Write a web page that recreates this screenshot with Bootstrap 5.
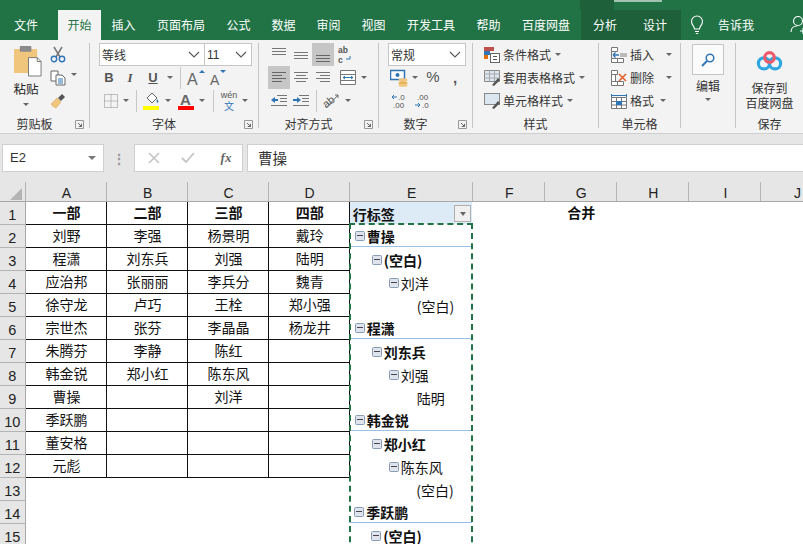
<!DOCTYPE html>
<html lang="zh"><head><meta charset="utf-8"><title>Excel</title>
<link href="https://cdn.jsdelivr.net/npm/bootstrap@5.3.0/dist/css/bootstrap.min.css" rel="stylesheet">
<style>
html,body{width:803px;height:544px;overflow:hidden;margin:0;background:#fff}
body{font-family:"Noto Sans CJK SC","Liberation Sans",sans-serif;font-size:12px;color:#333;position:relative}
.lat{font-family:"Liberation Sans","Noto Sans CJK SC",sans-serif}
.titlebar{height:40px;background:#217346;padding-top:10px;color:#fff;position:relative}
.tb{height:30px;line-height:30px;text-align:center;flex:none;font-size:12px}
.t2{width:45px}.t4{width:70px}.tf{width:52px;margin-right:6px}.tact{width:43px;background:#f3f3f3;color:#217346}
.tdark{background:#1d6039}.t48{width:48px}.t52{width:52px}
.darktop{position:absolute;left:580px;top:0;width:34px;height:10px;background:#1d6039}
.lightstrip{position:absolute;left:614px;top:0;width:48px;height:2px;background:#9fc3ae}
.tellme{margin-left:13px;width:72px}
.ribbon{height:94px;background:#f3f3f3;border-bottom:1px solid #cfcfcf;padding-top:3px}
.grp{height:85px;flex:none;display:flex;flex-direction:column;border-right:1px solid #c4c4c4}
.g1{width:90px}.g2{width:169px;padding-left:9px}.g3{width:120px;padding-left:9px}.g4{width:94px;padding-left:9px}
.g5{width:126px;padding-left:11px}.g6{width:82px;padding-left:12px}.g7{width:55px}.g8{flex:1;border-right:0}
.gbody{flex:1;min-height:0}
.glabel{height:20px;display:flex;align-items:center;margin-bottom:-6px}
.glabel span{flex:1;text-align:center}
.lnch{width:20px;flex:none;display:flex;justify-content:center}
.g2 .glabel,.g3 .glabel,.g4 .glabel{margin-left:-9px}
.g5 .glabel{margin-left:-11px}.g6 .glabel{margin-left:-12px}
.rr{height:23px;display:flex;align-items:center}
.ce{flex:none;display:flex;align-items:center;justify-content:center;height:100%}
.sel{background:#c6c6c6}
.x1{width:1px}.x2{width:2px}.x4{width:4px}.x5{width:5px}.x6{width:6px}.x7{width:7px}.x8{width:8px}.x10{width:10px}.x11{width:11px}.x14{width:14px}.x20{width:20px}.x22{width:22px}.x24{width:24px}.x26{width:26px}.x27{width:27px}.x28{width:28px}.x30{width:30px}.x36{width:36px}
.vsep{width:1px;height:22px;background:#c8c8c8;flex:none}
.crt{width:0;height:0;border-left:3px solid transparent;border-right:3px solid transparent;border-top:3px solid #666;flex:none}
.combo{height:23px;background:#fff;border:1px solid #c6c6c6;display:flex;align-items:center;justify-content:space-between;padding:0 4px 0 2px;flex:none;color:#333}
.cb1{width:106px}.cb2{width:48px;margin-left:-1px}.cb3{width:78px}
.bi{font-family:"Liberation Sans",sans-serif;font-weight:700;font-size:13px;color:#555}
.biser{font-family:"Liberation Serif",serif}
.lst{gap:3px}
.lst .crt{margin-left:1px}
.lst .crt.cg9{margin-left:9px}.lst .crt.cg3{margin-left:3px}
.w24t{width:24px}
.gcol{display:flex;flex-direction:column;align-items:center}
.pastecol{width:40px;padding-top:3px}
.smallcol{width:20px}
.pastetxt{font-size:12.5px;line-height:16px;color:#222;margin-left:-4px;margin-top:4px}
.pastecrt{margin-left:-4px;margin-top:6px}
.copycrt{margin:30px 0 0 3px}
.editbox{width:32px;height:31px;background:#fbfbfb;border:1px solid #c6c6c6;display:flex;align-items:center;justify-content:center;margin-top:1px}
.edtxt{line-height:16px;margin-top:3px}
.logo{margin-top:8px}
.lh14{line-height:14.5px;text-align:center;margin-top:10px}
.wen{line-height:9px}
.wen1{font-size:9px;color:#555}.wen2{font-size:10px;color:#2f75b5;line-height:11px}
.pct{font-size:15px;color:#555}.cma{font-size:15px;font-weight:700;color:#555;line-height:10px}
.fbar{height:48px;background:#e6e6e6;padding:10px 0 10px 2px;display:flex}
.namebox{width:102px;height:28px;background:#fff;border:1px solid #cfcfcf;display:flex;align-items:center;justify-content:space-between;padding:0 7px;font-size:13px;font-family:"Liberation Sans",sans-serif;color:#333}
.namebox .crt{border-top-color:#777;border-left-width:4px;border-right-width:4px;border-top-width:4px}
.dots{width:30px;display:flex;justify-content:center;align-items:center;color:#999;font-size:14px;font-weight:700;line-height:1}
.btnbox{width:109px;height:28px;background:#fff;border:1px solid #cfcfcf;display:flex;align-items:center;margin-right:4px}
.fx{font-family:"Liberation Serif",serif;font-style:italic;font-weight:700;font-size:13px;color:#666}
.finput{flex:1;height:28px;background:#fff;border:1px solid #cfcfcf;border-right:0;display:flex;align-items:center;padding-left:10px;font-size:14.5px;color:#333}
.sheetwrap{width:803px;height:362px;overflow:hidden;position:relative;background:#fff}
.sheet{table-layout:fixed;width:833px;border-collapse:collapse;font-size:14px;color:#111}
.sheet thead th{height:19px;background:#e6e6e6;font-weight:400;text-align:center;padding:0 0 0 2px;vertical-align:bottom;line-height:16px;border-right:1px solid #b4b4b4;border-bottom:1px solid #a8a8a8;font-family:"Liberation Sans",sans-serif;font-size:14px;color:#222}
.sheet tbody tr{height:23px}
.sheet tbody th{background:#e6e6e6;font-weight:400;text-align:center;padding:4px 0 0;border-bottom:1px solid #b4b4b4;border-right:1px solid #a8a8a8;font-family:"Liberation Sans",sans-serif;font-size:14.5px;line-height:18px;color:#222}
.sheet td{padding:0 0 2px 2px;text-align:center;line-height:20px;white-space:nowrap;overflow:hidden}
.blk{border:1.5px solid #111}
.bold{font-weight:700}
.sheet td.pv{text-align:left;font-size:14px;padding:0}
.pvh{background:#ddebf7}
.pvh-in{display:flex;align-items:center;justify-content:space-between;padding:2px 1px 0 3px;height:22px}
.ddbtn{width:17px;height:17px;background:#f0f0f0;border:1px solid #b0b0b0;display:flex;align-items:center;justify-content:center}
.ddbtn .crt{border-top-width:4px;border-left-width:3.5px;border-right-width:3.5px}
.lv{display:flex;align-items:center;gap:2px;height:22px;padding-top:2px;line-height:20px}
.l0{padding-left:5px}.l1{padding-left:22px}.l2{padding-left:39px}.l3{padding-left:67px}
.pvb .lv{height:23px;padding-top:1px;border-bottom:1px solid #9bc2e6}
.exp{width:10px;height:10px;border:1px solid #8a9bb5;background:#dfe4ec;border-radius:1.5px;flex:none;display:flex;align-items:center;justify-content:center}
.exp i{display:block;width:6px;height:1px;background:#445}
.ants{position:absolute;left:349px;top:41px;width:124px;height:400px;border:2px dashed #217346;border-bottom:0;pointer-events:none}
.corner{display:flex;justify-content:flex-end;padding:0 3px 1px 0}
col.x26{width:25px}col.cw{width:81px}col.ce2{width:123px}col.cf{width:72px}.flex-none{flex:none}
</style></head><body>

<svg width="0" height="0" class="d-block position-absolute"><defs>
<symbol id="lau" viewBox="0 0 9 9"><path d="M.5 .5h8v8M.5 .5v8h8" fill="none" stroke="#999"/><path d="M3 3l3.5 3.5M6.5 3.8v2.7H3.8" fill="none" stroke="#666"/></symbol>
<symbol id="chev" viewBox="0 0 12 7"><path d="M1 1l5 5 5-5" fill="none" stroke="#555" stroke-width="1.1"/></symbol>
</defs></svg>

<div class="titlebar d-flex">
 <div class="darktop"></div><div class="lightstrip"></div>
 <div class="tb tf">文件</div><div class="tb tact">开始</div><div class="tb t2">插入</div><div class="tb t4">页面布局</div><div class="tb t2">公式</div><div class="tb t2">数据</div><div class="tb t2">审阅</div><div class="tb t2">视图</div><div class="tb t4">开发工具</div><div class="tb t2">帮助</div><div class="tb t4">百度网盘</div>
 <div class="tb t48 tdark">分析</div><div class="tb t52 tdark">设计</div>
 <div class="d-flex align-items-center h-100">
  <svg class="ms-2" width="16" height="20" viewBox="0 0 16 20"><path d="M5.500 14c0-3-3-4-3-7.500a5.500 5.500 0 0 1 11 0c0 3.500-3 4.500-3 7.500zM6 16.500h4M6.800 18.500h2.400" fill="none" stroke="#fff" stroke-width="1.100"/></svg>
  <span class="tellme">告诉我</span>
  <svg width="20" height="20" viewBox="0 0 20 20"><circle cx="8" cy="6" r="4.500" fill="none" stroke="#fff" stroke-width="1.100"/><path d="M1 17c0-4 3-6 6-6M13 13v6M10 16h6" fill="none" stroke="#fff" stroke-width="1.100"/></svg>
 </div>
</div>

<div class="ribbon d-flex">
 <!-- clipboard -->
 <div class="grp g1">
  <div class="gbody d-flex">
   <div class="x8 flex-none"></div>
   <div class="gcol pastecol">
    <svg width="29" height="31" viewBox="0 0 30 32"><rect x="0" y="3" width="24" height="25" rx="1" fill="#f0c67c"/><rect x="6" y="0" width="12" height="6" rx="1" fill="#8a8a8a"/><path d="M15 12h9l4 4v15H15z" fill="#fff" stroke="#777"/><path d="M24 12v4h4" fill="none" stroke="#777"/></svg>
    <span class="pastetxt">粘贴</span>
    <span class="crt pastecrt"></span>
   </div>
   <div class="gcol smallcol">
    <div class="rr"><svg width="16" height="17" viewBox="0 0 16 17"><path d="M4 1l6 10M12 1L6 11" stroke="#777" stroke-width="1.500" fill="none"/><circle cx="4" cy="13" r="2.700" fill="none" stroke="#2f75b5" stroke-width="1.400"/><circle cx="12" cy="13" r="2.700" fill="none" stroke="#2f75b5" stroke-width="1.400"/></svg></div>
    <div class="rr"><svg width="16" height="16" viewBox="0 0 16 16"><path d="M1 1h7v10H1z" fill="#fff" stroke="#666"/><path d="M6 5h6l3 3v7H6z" fill="#fff" stroke="#666"/><path d="M8 9h5M8 11h5M8 13h5" stroke="#2f75b5"/></svg></div>
    <div class="rr"><svg width="16" height="16" viewBox="0 0 16 16"><path d="M1 11l6-6 4 4-5 6c-2-1-4-2-5-4z" fill="#f0c67c" stroke="#d9a95c" stroke-width=".6"/><path d="M8 5l4-4 3 3-4 4z" fill="#555"/></svg></div>
   </div>
   <span class="crt copycrt"></span>
  </div>
  <div class="glabel"><span>剪贴板</span><div class="lnch"><svg width="9" height="9"><use href="#lau"/></svg></div></div>
 </div>
 <!-- font -->
 <div class="grp g2">
  <div class="gbody">
   <div class="rr"><div class="combo cb1"><span>等线</span><svg width="12" height="7"><use href="#chev"/></svg></div><div class="combo cb2"><span class="lat">11</span><svg width="12" height="7"><use href="#chev"/></svg></div></div>
   <div class="rr">
    <div class="ce x20 bi">B</div><div class="ce x22 bi biser fst-italic">I</div><div class="ce x24 bi text-decoration-underline">U</div><div class="ce x10"><span class="crt"></span></div><div class="ce x5"></div><div class="vsep"></div><div class="ce x4"></div>
    <div class="ce x22"><svg width="20" height="18" viewBox="0 0 20 18"><text x="1" y="16" font-family="Liberation Sans" font-size="16" fill="#666">A</text><path d="M13 4l3-3 3 3z" fill="#2f75b5"/></svg></div>
    <div class="ce x22"><svg width="20" height="18" viewBox="0 0 20 18"><text x="2" y="16" font-family="Liberation Sans" font-size="14" fill="#666">A</text><path d="M12 1l3 3 3-3z" fill="#2f75b5"/></svg></div>
   </div>
   <div class="rr">
    <div class="ce x24"><svg width="14" height="14" viewBox="0 0 14 14"><path d="M.5.500h13v13H.5zM7 .500v13M.5 7h13" fill="none" stroke="#888" stroke-dasharray="1 1"/></svg></div><div class="ce x6"><span class="crt"></span></div><div class="ce x7"></div><div class="vsep"></div>
    <div class="ce x28"><svg width="18" height="18" viewBox="0 0 18 18"><path d="M5 6l5-5 5 5-5 5z" fill="#fff" stroke="#666"/><path d="M15 7c1 1.500 2 2.500 1 3.500s-2-1-1-3.500z" fill="#2f75b5"/><rect x="1" y="14" width="16" height="4" fill="#ffff00"/></svg></div><div class="ce x6"><span class="crt"></span></div><div class="ce x2"></div>
    <div class="ce x26"><svg width="18" height="18" viewBox="0 0 18 18"><text x="3" y="13" font-family="Liberation Sans" font-weight="700" font-size="15" fill="#666">A</text><rect x="1" y="14" width="16" height="4" fill="#ff0000"/></svg></div><div class="ce x6"><span class="crt"></span></div><div class="ce x8"></div><div class="vsep"></div><div class="ce x2"></div>
    <div class="ce x26 gcol wen"><span class="lat wen1">wén</span><span class="wen2">文</span></div><div class="ce x6"><span class="crt"></span></div>
   </div>
  </div>
  <div class="glabel"><span>字体</span><div class="lnch"><svg width="9" height="9"><use href="#lau"/></svg></div></div>
 </div>
 <!-- align -->
 <div class="grp g3">
  <div class="gbody">
   <div class="rr">
    <div class="ce x22"><svg width="14" height="14"><path d="M0 .5h14M0 3.500h14M0 6.500h14" stroke="#777"/></svg></div>
    <div class="ce x22"><svg width="14" height="14"><path d="M0 4.500h14M0 7.500h14M0 10.500h14" stroke="#777"/></svg></div>
    <div class="ce x22 sel"><svg width="14" height="14"><path d="M0 7.500h14M0 10.500h14M0 13.500h14" stroke="#666"/></svg></div>
    <div class="ce x22"><svg width="14" height="19" viewBox="0 0 14 19"><text x="0" y="8" font-family="Liberation Sans" font-size="8.500" font-weight="700" fill="#555">ab</text><text x="0" y="18" font-family="Liberation Sans" font-size="8.500" font-weight="700" fill="#555">c</text><path d="M12 11v3H8" fill="none" stroke="#2f75b5"/></svg></div>
   </div>
   <div class="rr">
    <div class="ce x22 sel"><svg width="14" height="13"><path d="M0 1.500h14M0 4.500h10M0 7.500h14M0 10.500h10" stroke="#666"/></svg></div>
    <div class="ce x22"><svg width="14" height="13"><path d="M0 1.500h14M2 4.500h10M0 7.500h14M2 10.500h10" stroke="#777"/></svg></div>
    <div class="ce x22"><svg width="14" height="13"><path d="M0 1.500h14M4 4.500h10M0 7.500h14M4 10.500h10" stroke="#777"/></svg></div>
    <div class="ce x27"><svg width="16" height="15" viewBox="0 0 16 15"><path d="M.5.500h15v14H.5zM.5 4.500h15M.5 10.500h15" fill="#fff" stroke="#777"/><path d="M3 7.500h10M3 7.500l2-1.500M3 7.500l2 1.500M13 7.500l-2-1.500M13 7.500l-2 1.500" stroke="#2f75b5" fill="none"/></svg></div><div class="ce x6"><span class="crt"></span></div>
   </div>
   <div class="rr">
    <div class="ce x22"><svg width="16" height="13"><path d="M6 1.500h10M9 4.500h7M9 7.500h7M0 11.500h16" stroke="#777"/><path d="M0 6l4-3v6z" fill="#2f75b5"/><path d="M3 6h4" stroke="#2f75b5" stroke-width="2"/></svg></div>
    <div class="ce x22"><svg width="16" height="13"><path d="M6 1.500h10M9 4.500h7M9 7.500h7M0 11.500h16" stroke="#777"/><path d="M8 6L4 3v6z" fill="#2f75b5"/><path d="M0 6h5" stroke="#2f75b5" stroke-width="2"/></svg></div>
    <div class="ce x4"></div><div class="vsep"></div>
    <div class="ce x28"><svg width="20" height="17" viewBox="0 0 20 17"><text x="1" y="13" transform="rotate(-38 8 9)" font-family="Liberation Sans" font-size="11" fill="#555">ab</text><path d="M5 16L17 3M17 3l-3 0M17 3v3" stroke="#666" fill="none"/></svg></div><div class="ce x6"><span class="crt"></span></div>
   </div>
  </div>
  <div class="glabel"><span>对齐方式</span><div class="lnch"><svg width="9" height="9"><use href="#lau"/></svg></div></div>
 </div>
 <!-- number -->
 <div class="grp g4">
  <div class="gbody">
   <div class="rr"><div class="combo cb3"><span>常规</span><svg width="12" height="7"><use href="#chev"/></svg></div></div>
   <div class="rr">
    <div class="ce x22"><svg width="18" height="18" viewBox="0 0 18 18"><rect x=".5" y="1.500" width="14" height="9" fill="#fff" stroke="#2f75b5" stroke-width="1.500"/><circle cx="7.500" cy="6" r="2" fill="#2f75b5"/><ellipse cx="13" cy="11" rx="4.500" ry="1.800" fill="#f0c67c"/><ellipse cx="13" cy="14" rx="4.500" ry="1.800" fill="#e7b45c"/><ellipse cx="13" cy="16.200" rx="4.500" ry="1.500" fill="#f0c67c"/></svg></div><div class="ce x2"></div><div class="ce x6"><span class="crt"></span></div>
    <div class="ce x30 lat pct">%</div><div class="ce x14 lat cma">,</div>
   </div>
   <div class="rr">
    <div class="ce x22"><svg width="17" height="16" viewBox="0 0 17 16"><path d="M1 4h5M1 4l2-2M1 4l2 2" stroke="#2f75b5" fill="none"/><text x="7" y="7" font-family="Liberation Sans" font-size="8" fill="#555">.0</text><text x="2" y="15" font-family="Liberation Sans" font-size="8" fill="#555">.00</text></svg></div>
    <div class="ce x24"><svg width="17" height="16" viewBox="0 0 17 16"><text x="3" y="7" font-family="Liberation Sans" font-size="8" fill="#555">.00</text><path d="M1 12h5M6 12l-2-2M6 12l-2 2" stroke="#2f75b5" fill="none"/><text x="8" y="15" font-family="Liberation Sans" font-size="8" fill="#555">.0</text></svg></div>
   </div>
  </div>
  <div class="glabel"><span>数字</span><div class="lnch"><svg width="9" height="9"><use href="#lau"/></svg></div></div>
 </div>
 <!-- styles -->
 <div class="grp g5">
  <div class="gbody">
   <div class="rr lst"><svg width="16" height="16" viewBox="0 0 16 16"><rect x="0" y="0" width="10" height="4" fill="#c0504d"/><rect x="0" y="4" width="6" height="4" fill="#2f75b5"/><rect x="0" y="8" width="4" height="4" fill="#e46c0a"/><rect x="6.500" y="6.500" width="9" height="9" fill="#fff" stroke="#666"/><path d="M9 9.500h4M9 12.500h4" stroke="#555"/></svg><span>条件格式</span><span class="crt"></span></div>
   <div class="rr lst"><svg width="16" height="16" viewBox="0 0 16 16"><path d="M.5.500h15v11H.5z" fill="#dce6f1" stroke="#888"/><path d="M5.500.500v11M10.500.500v11M.5 4h15M.5 8h15" stroke="#aaa"/><path d="M8 15l6-7 2 2-6 6z" fill="#555"/></svg><span>套用表格格式</span><span class="crt"></span></div>
   <div class="rr lst"><svg width="16" height="16" viewBox="0 0 16 16"><rect x=".5" y=".5" width="15" height="11" fill="#dce6f1" stroke="#888"/><path d="M8 15l6-7 2 2-6 6z" fill="#555"/></svg><span>单元格样式</span><span class="crt"></span></div>
  </div>
  <div class="glabel"><span>样式</span></div>
 </div>
 <!-- cells -->
 <div class="grp g6">
  <div class="gbody">
   <div class="rr lst"><svg width="16" height="16" viewBox="0 0 16 16"><path d="M.5.500h6v4h-6zM.5 11.500h6v4h-6zM6.500 11.500h6v4h-6zM.5 4.500v7" fill="#fff" stroke="#777"/><path d="M2 8h6M2 8l2.500-2.500M2 8l2.500 2.500" stroke="#2f75b5" stroke-width="1.300" fill="none"/><rect x="9" y="6" width="7" height="4" fill="#bbb"/></svg><span class="w24t">插入</span><span class="crt cg9"></span></div>
   <div class="rr lst"><svg width="16" height="16" viewBox="0 0 16 16"><path d="M.5.500h6v4h-6zM.5 11.500h6v4h-6zM6.500 11.500h6v4h-6zM.5 4.500h4v7h-4z" fill="#fff" stroke="#777"/><path d="M8 4l7 7M15 4l-7 7" stroke="#e2602e" stroke-width="1.600"/></svg><span class="w24t">删除</span><span class="crt cg9"></span></div>
   <div class="rr lst"><svg width="16" height="16" viewBox="0 0 16 16"><path d="M.5 2.500h15M.5 1v3M15.500 1v3" stroke="#2f75b5"/><path d="M.5 4.500h15v11H.5zM5.500 4.500v11M10.500 4.500v11M.5 8.500h15M.5 12h15" fill="#fff" stroke="#777"/><rect x="5" y="8" width="6" height="4" fill="#2f75b5"/></svg><span class="w24t">格式</span><span class="crt cg3"></span></div>
  </div>
  <div class="glabel"><span>单元格</span></div>
 </div>
 <!-- edit -->
 <div class="grp g7">
  <div class="gbody gcol">
   <div class="editbox"><svg width="14" height="14" viewBox="0 0 14 14"><circle cx="9" cy="5" r="3.800" fill="none" stroke="#2f75b5" stroke-width="1.500"/><path d="M6 8l-5 5" stroke="#2f75b5" stroke-width="2"/></svg></div>
   <span class="edtxt">编辑</span>
   <span class="crt mt-1"></span>
  </div>
 </div>
 <!-- save -->
 <div class="grp g8">
  <div class="gbody gcol">
   <svg class="logo" width="27" height="20" viewBox="0 0 34 25"><circle cx="10" cy="15.500" r="7" fill="none" stroke="#2ea7e0" stroke-width="4"/><circle cx="24" cy="15.500" r="7" fill="none" stroke="#2ea7e0" stroke-width="4"/><circle cx="17" cy="8" r="6" fill="none" stroke="#f0596a" stroke-width="4"/></svg>
   <div class="lh14">保存到<br>百度网盘</div>
  </div>
  <div class="glabel"><span>保存</span></div>
 </div>
</div>

<div class="fbar">
 <div class="namebox"><span>E2</span><span class="crt"></span></div>
 <div class="dots">⋮</div>
 <div class="btnbox">
  <div class="ce x30 ms-1"><svg width="12" height="12"><path d="M1 1l10 10M11 1L1 11" stroke="#c4c4c4" stroke-width="1.600"/></svg></div>
  <div class="ce x30 ms-1"><svg width="14" height="12"><path d="M1 6l4 4 8-9" stroke="#c4c4c4" stroke-width="1.800" fill="none"/></svg></div>
  <div class="ce x30 fx ms-2">fx</div>
 </div>
 <div class="finput">曹操</div>
</div>

<div class="sheetwrap">
<table class="sheet">
<colgroup><col class="x26"><col class="cw"><col class="cw"><col class="cw"><col class="cw"><col class="ce2"><col class="cf"><col class="cf"><col class="cf"><col class="cf"><col class="cf"></colgroup>
<thead><tr><th><div class="corner"><svg width="12" height="12"><path d="M12 0v12H0z" fill="#b4b4b4"/></svg></div></th><th>A</th><th>B</th><th>C</th><th>D</th><th>E</th><th>F</th><th>G</th><th>H</th><th>I</th><th>J</th></tr></thead>
<tbody>
<tr><th>1</th><td class="blk bold">一部</td><td class="blk bold">二部</td><td class="blk bold">三部</td><td class="blk bold">四部</td><td class="pv pvh"><div class="pvh-in"><span class="bold">行标签</span><span class="ddbtn"><span class="crt"></span></span></div></td><td></td><td class="bold">合并</td><td></td><td></td><td></td></tr>
<tr><th>2</th><td class="blk">刘野</td><td class="blk">李强</td><td class="blk">杨景明</td><td class="blk">戴玲</td><td class="pv pvb bold"><div class="lv l0"><span class="exp"><i></i></span>曹操</div></td><td colspan="5"></td></tr>
<tr><th>3</th><td class="blk">程潇</td><td class="blk">刘东兵</td><td class="blk">刘强</td><td class="blk">陆明</td><td class="pv bold"><div class="lv l1"><span class="exp"><i></i></span>(空白)</div></td><td colspan="5"></td></tr>
<tr><th>4</th><td class="blk">应治邦</td><td class="blk">张丽丽</td><td class="blk">李兵分</td><td class="blk">魏青</td><td class="pv"><div class="lv l2"><span class="exp"><i></i></span>刘洋</div></td><td colspan="5"></td></tr>
<tr><th>5</th><td class="blk">徐守龙</td><td class="blk">卢巧</td><td class="blk">王栓</td><td class="blk">郑小强</td><td class="pv"><div class="lv l3">(空白)</div></td><td colspan="5"></td></tr>
<tr><th>6</th><td class="blk">宗世杰</td><td class="blk">张芬</td><td class="blk">李晶晶</td><td class="blk">杨龙井</td><td class="pv pvb bold"><div class="lv l0"><span class="exp"><i></i></span>程潇</div></td><td colspan="5"></td></tr>
<tr><th>7</th><td class="blk">朱腾芬</td><td class="blk">李静</td><td class="blk">陈红</td><td class="blk"></td><td class="pv bold"><div class="lv l1"><span class="exp"><i></i></span>刘东兵</div></td><td colspan="5"></td></tr>
<tr><th>8</th><td class="blk">韩金锐</td><td class="blk">郑小红</td><td class="blk">陈东风</td><td class="blk"></td><td class="pv"><div class="lv l2"><span class="exp"><i></i></span>刘强</div></td><td colspan="5"></td></tr>
<tr><th>9</th><td class="blk">曹操</td><td class="blk"></td><td class="blk">刘洋</td><td class="blk"></td><td class="pv"><div class="lv l3">陆明</div></td><td colspan="5"></td></tr>
<tr><th>10</th><td class="blk">季跃鹏</td><td class="blk"></td><td class="blk"></td><td class="blk"></td><td class="pv pvb bold"><div class="lv l0"><span class="exp"><i></i></span>韩金锐</div></td><td colspan="5"></td></tr>
<tr><th>11</th><td class="blk">董安格</td><td class="blk"></td><td class="blk"></td><td class="blk"></td><td class="pv bold"><div class="lv l1"><span class="exp"><i></i></span>郑小红</div></td><td colspan="5"></td></tr>
<tr><th>12</th><td class="blk">元彪</td><td class="blk"></td><td class="blk"></td><td class="blk"></td><td class="pv"><div class="lv l2"><span class="exp"><i></i></span>陈东风</div></td><td colspan="5"></td></tr>
<tr><th>13</th><td colspan="4"></td><td class="pv"><div class="lv l3">(空白)</div></td><td colspan="5"></td></tr>
<tr><th>14</th><td colspan="4"></td><td class="pv pvb bold"><div class="lv l0"><span class="exp"><i></i></span>季跃鹏</div></td><td colspan="5"></td></tr>
<tr><th>15</th><td colspan="4"></td><td class="pv bold"><div class="lv l1"><span class="exp"><i></i></span>(空白)</div></td><td colspan="5"></td></tr>
</tbody></table>
<div class="ants"></div>
</div>
<script src="https://cdn.jsdelivr.net/npm/bootstrap@5.3.0/dist/js/bootstrap.bundle.min.js"></script>
</body></html>
